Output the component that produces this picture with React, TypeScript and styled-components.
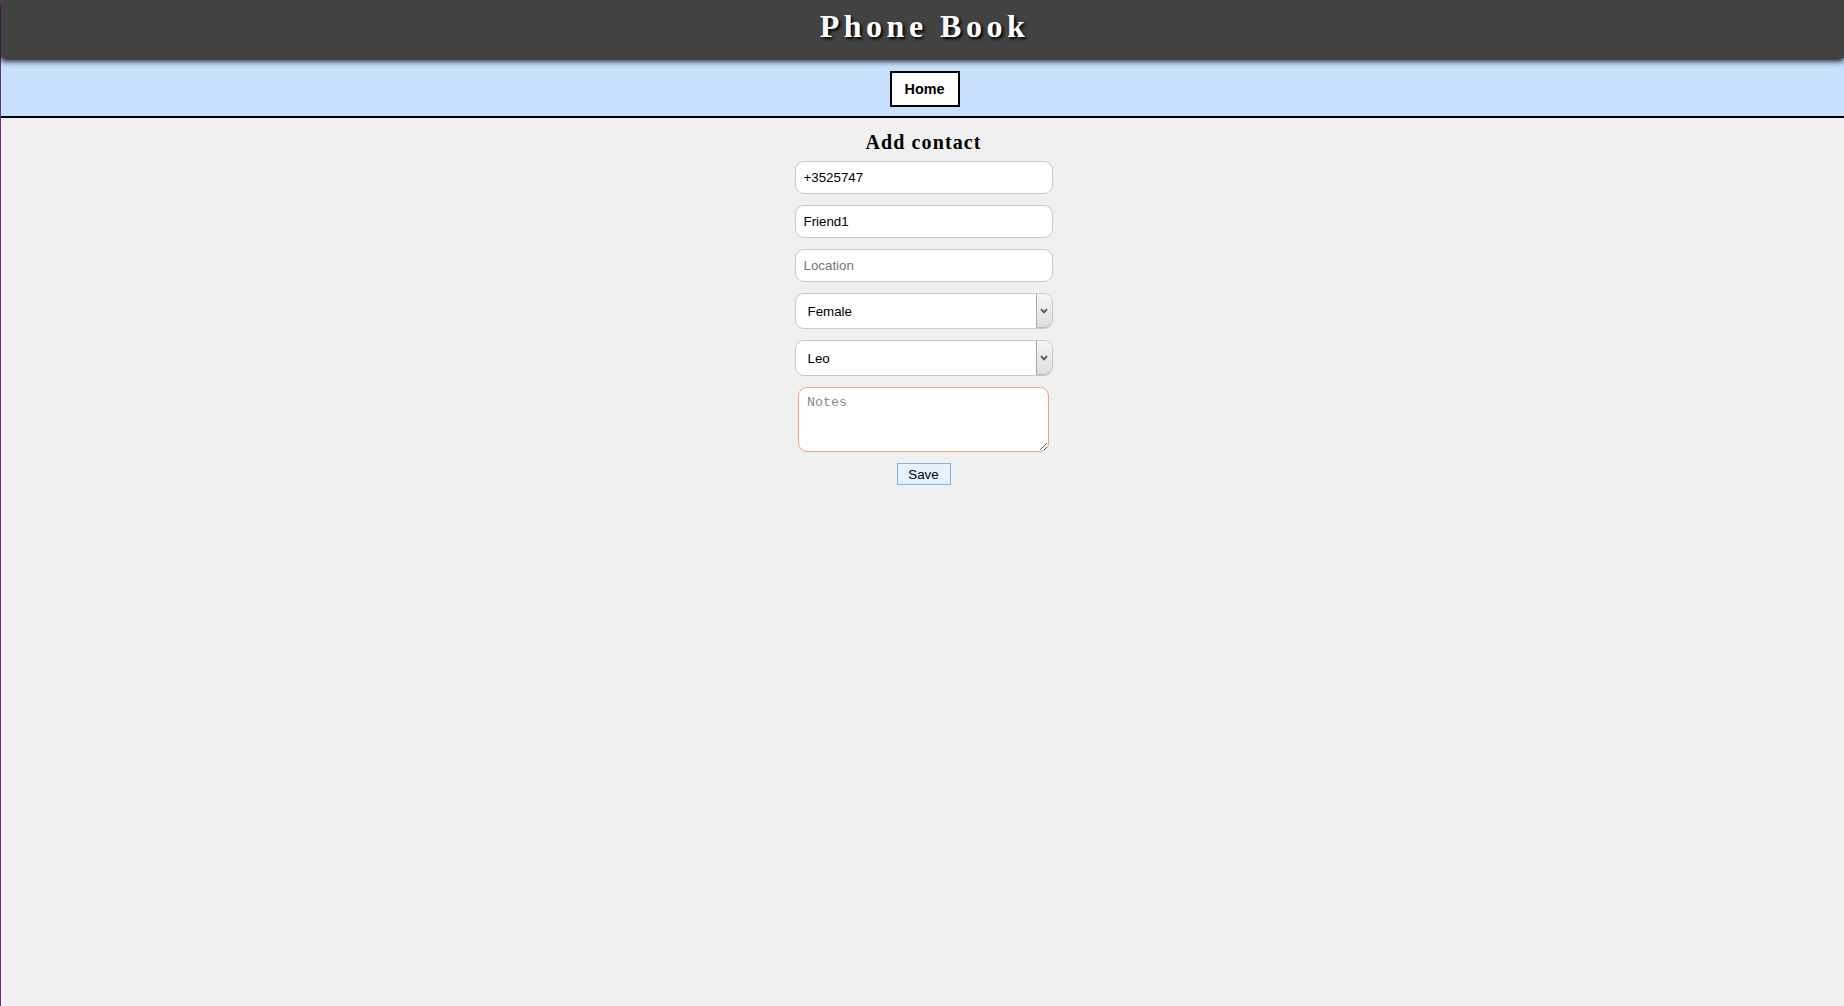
import React from "react";
import styled, { createGlobalStyle } from "styled-components";

const GlobalStyle = createGlobalStyle`
  html, body {
    margin: 0;
    padding: 0;
    background: #f0f0f0;
  }
  body {
    font-family: "Liberation Sans", Arial, sans-serif;
  }
`

const Page = styled.div`
  min-height: 100vh;
  border-left: 1px solid #6b2d7b;
  background: #f0f0f0;
`

const Header = styled.header`
  position: relative;
  z-index: 2;
  height: 58px;
  padding-left: 4px;
  background: #424242;
  box-shadow: 0 3px 6px rgba(0, 0, 0, 0.95);
  text-align: center;
`

const Title = styled.h1`
  margin: 0;
  line-height: 52px;
  font-family: "Liberation Serif", Georgia, serif;
  font-size: 32px;
  font-weight: bold;
  letter-spacing: 4.5px;
  color: #fff;
  text-shadow: 2px 2px 3px #000;
`

const Nav = styled.nav`
  position: relative;
  z-index: 1;
  height: 60px;
  box-sizing: border-box;
  padding: 13px 0 0 4px;
  background: #c9e1fc;
  border-bottom: 2px solid #000;
  display: flex;
  justify-content: center;
  align-items: flex-start;
`

const NavLink = styled.a`
  display: flex;
  align-items: center;
  justify-content: center;
  box-sizing: border-box;
  width: 70px;
  height: 36px;
  background: #fff;
  border: 2px solid #000;
  color: #000;
  font-family: "Liberation Sans", Arial, sans-serif;
  font-size: 14.4px;
  font-weight: bold;
  text-decoration: none;
  cursor: pointer;
`

const Main = styled.main`
  padding-left: 2px;
  display: flex;
  justify-content: center;
`

const Form = styled.form`
  width: 258px;
  display: flex;
  flex-direction: column;
  align-items: center;
  gap: 11px;
`

const Heading = styled.h2`
  margin: 13px 0 -4px;
  font-family: "Liberation Serif", Georgia, serif;
  font-size: 20px;
  font-weight: bold;
  letter-spacing: 1.1px;
  line-height: 23px;
  color: #000;
`

const TextInput = styled.input`
  box-sizing: border-box;
  width: 258px;
  height: 33px;
  margin: 0;
  padding: 0 8px;
  border: 1px solid #c8c8c8;
  border-radius: 9px;
  background: #fff;
  font-family: "Liberation Sans", Arial, sans-serif;
  font-size: 13.33px;
  color: #000;
  outline: none;

  &::placeholder {
    color: #777;
  }
`

const SelectBox = styled.div`
  position: relative;
  width: 258px;
  height: 36px;
`

const Select = styled.select`
  box-sizing: border-box;
  width: 100%;
  height: 100%;
  margin: 0;
  padding: 0 24px 0 12px;
  appearance: none;
  border: 1px solid #c8c8c8;
  border-radius: 9px;
  background: #fff;
  font-family: "Liberation Sans", Arial, sans-serif;
  font-size: 13.33px;
  color: #000;
  outline: none;
`

const SelectArrow = styled.span`
  position: absolute;
  top: 1px;
  right: 1px;
  bottom: 1px;
  width: 15px;
  display: flex;
  align-items: center;
  justify-content: center;
  border-left: 1px solid #a8a8a8;
  border-bottom: 1px solid #b8b8b8;
  border-radius: 0 8px 8px 0;
  background: linear-gradient(#f6f6f6, #dedede);
  pointer-events: none;
`

const Notes = styled.textarea`
  box-sizing: border-box;
  width: 251px;
  height: 65px;
  margin: 0;
  padding: 7px 8px;
  border: 1px solid #f4a374;
  border-radius: 9px;
  background: #fff;
  font-family: "Liberation Mono", "Courier New", monospace;
  font-size: 13.33px;
  outline: none;

  &::placeholder {
    color: #8a8a8a;
  }
`

const SaveButton = styled.button`
  box-sizing: border-box;
  width: 54px;
  height: 22px;
  padding: 0;
  background: #e5f1fb;
  border: 1px solid #7fb4ea;
  border-radius: 0;
  font-family: "Liberation Sans", Arial, sans-serif;
  font-size: 13.33px;
  color: #000;
  cursor: pointer;
`

const Chevron = () => (
  <svg width="8" height="6" viewBox="0 0 8 6">
    <path d="M1 1.2 L4 4.4 L7 1.2" fill="none" stroke="#555" strokeWidth="1.8" />
  </svg>
)

interface ISelectProps {
  value: string;
  options: string[];
}

function SelectField(props: ISelectProps): JSX.Element {
  return (
    <SelectBox>
      <Select defaultValue={props.value}>
        {props.options.map(o => <option key={o}>{o}</option>)}
      </Select>
      <SelectArrow><Chevron/></SelectArrow>
    </SelectBox>
  )
}

const signs = ["Aries", "Taurus", "Gemini", "Cancer", "Leo", "Virgo", "Libra",
  "Scorpio", "Sagittarius", "Capricorn", "Aquarius", "Pisces"];

export default function App(): JSX.Element {
  return (
    <Page>
      <GlobalStyle/>
      <Header>
        <Title>Phone Book</Title>
      </Header>
      <Nav>
        <NavLink>Home</NavLink>
      </Nav>
      <Main>
        <Form onSubmit={e => e.preventDefault()}>
          <Heading>Add contact</Heading>
          <TextInput defaultValue="+3525747" placeholder="Phone"/>
          <TextInput defaultValue="Friend1" placeholder="Name"/>
          <TextInput placeholder="Location"/>
          <SelectField value="Female" options={["Female", "Male"]}/>
          <SelectField value="Leo" options={signs}/>
          <Notes placeholder="Notes"/>
          <SaveButton type="submit">Save</SaveButton>
        </Form>
      </Main>
    </Page>
  )
}
